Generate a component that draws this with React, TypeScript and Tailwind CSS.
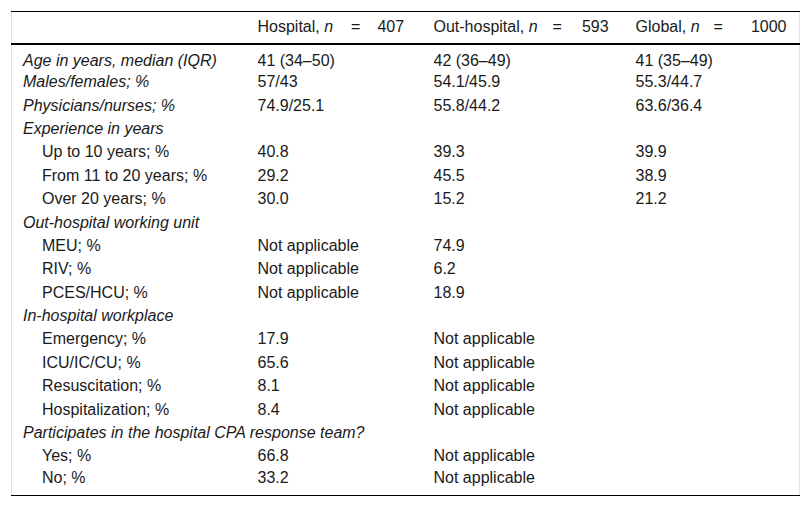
import React from "react";

type Row = {
  label: string;
  kind: "head" | "item";
  values: string[];
};

const rows: Row[] = [
  { label: "Age in years, median (IQR)", kind: "head", values: ["41 (34–50)", "42 (36–49)", "41 (35–49)"] },
  { label: "Males/females; %", kind: "head", values: ["57/43", "54.1/45.9", "55.3/44.7"] },
  { label: "Physicians/nurses; %", kind: "head", values: ["74.9/25.1", "55.8/44.2", "63.6/36.4"] },
  { label: "Experience in years", kind: "head", values: ["", "", ""] },
  { label: "Up to 10 years; %", kind: "item", values: ["40.8", "39.3", "39.9"] },
  { label: "From 11 to 20 years; %", kind: "item", values: ["29.2", "45.5", "38.9"] },
  { label: "Over 20 years; %", kind: "item", values: ["30.0", "15.2", "21.2"] },
  { label: "Out-hospital working unit", kind: "head", values: ["", "", ""] },
  { label: "MEU; %", kind: "item", values: ["Not applicable", "74.9", ""] },
  { label: "RIV; %", kind: "item", values: ["Not applicable", "6.2", ""] },
  { label: "PCES/HCU; %", kind: "item", values: ["Not applicable", "18.9", ""] },
  { label: "In-hospital workplace", kind: "head", values: ["", "", ""] },
  { label: "Emergency; %", kind: "item", values: ["17.9", "Not applicable", ""] },
  { label: "ICU/IC/CU; %", kind: "item", values: ["65.6", "Not applicable", ""] },
  { label: "Resuscitation; %", kind: "item", values: ["8.1", "Not applicable", ""] },
  { label: "Hospitalization; %", kind: "item", values: ["8.4", "Not applicable", ""] },
  { label: "Participates in the hospital CPA response team?", kind: "head", values: ["", "", ""] },
  { label: "Yes; %", kind: "item", values: ["66.8", "Not applicable", ""] },
  { label: "No; %", kind: "item", values: ["33.2", "Not applicable", ""] },
];

export default function App() {
  return (
    <div
      className="min-h-[507px] w-[810px] bg-white pl-[11px] pt-[11px] text-[16px] text-[#1a1a1a]"
      style={{ fontFamily: '"Liberation Sans", Arial, sans-serif' }}
    >
      <table className="w-[788px] table-fixed border-collapse border-x border-x-[#e4e4e4]">
        <colgroup>
          <col className="w-[235px]" />
          <col className="w-[176px]" />
          <col className="w-[202px]" />
          <col className="w-[175px]" />
        </colgroup>
        <thead>
          <tr className="h-[32px] border-t border-t-black border-b-2 border-b-black">
            <th />
            <th className="pl-[11px] text-left font-normal whitespace-nowrap">
              Hospital, <i>n</i>
              <span className="ml-[18px] mr-[17px]">=</span>407
            </th>
            <th className="pl-[11px] text-left font-normal whitespace-nowrap">
              Out-hospital, <i>n</i>
              <span className="ml-[15px] mr-[20px]">=</span>593
            </th>
            <th className="pl-[11px] text-left font-normal whitespace-nowrap">
              Global, <i>n</i>
              <span className="ml-[14px] mr-[28px]">=</span>1000
            </th>
          </tr>
        </thead>
        <tbody className="border-b border-b-black">
          {rows.map((r, i) => (
            <tr
              key={r.label}
              className={
                i === 0
                  ? "h-[27px] align-bottom"
                  : i === rows.length - 1
                  ? "h-[27px] align-top"
                  : "h-[23.4px]"
              }
            >
              <td
                className={
                  r.kind === "head"
                    ? "pl-[11px] italic whitespace-nowrap leading-[20px]"
                    : "pl-[30px] whitespace-nowrap leading-[20px]"
                }
              >
                {r.label}
              </td>
              {r.values.map((v, j) => (
                <td key={j} className="pl-[11px] leading-[20px]">
                  {v}
                </td>
              ))}
            </tr>
          ))}
        </tbody>
      </table>
    </div>
  );
}
